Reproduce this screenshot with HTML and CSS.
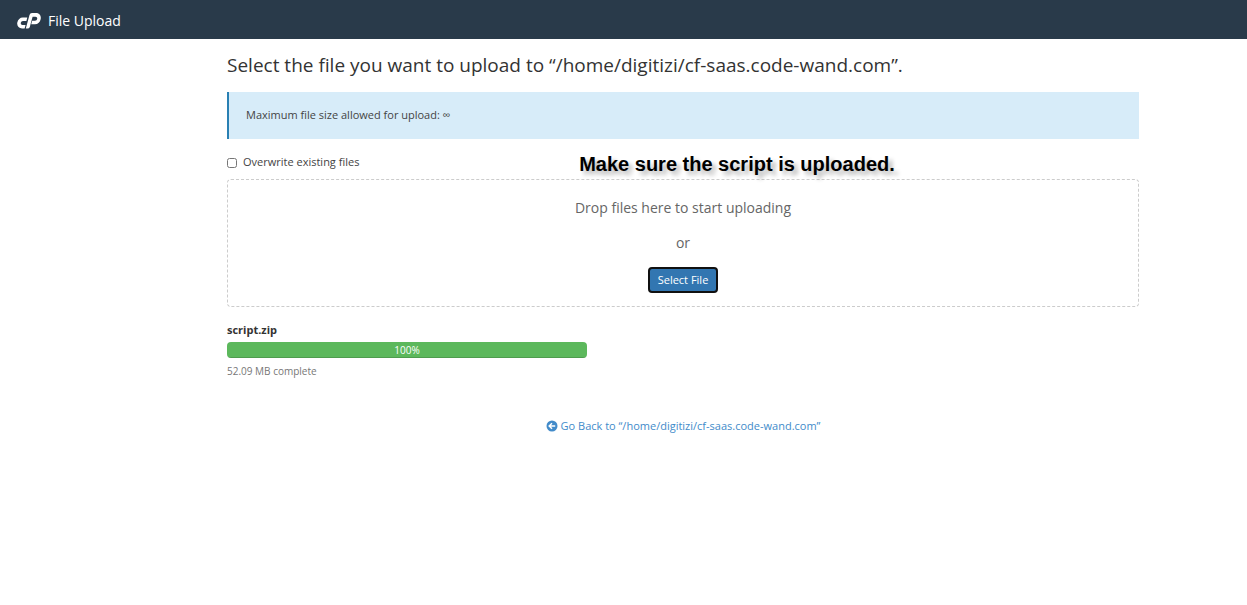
FILE: index.html
```html
<!DOCTYPE html>
<html lang="en">
<head>
<meta charset="utf-8">
<meta name="viewport" content="width=device-width, initial-scale=1">
<title>File Upload</title>
<link rel="stylesheet" href="styles.css">
</head>
<body>
<header class="navbar">
  <svg class="logo" viewBox="0 0 24 16" aria-hidden="true">
    <path fill="#fff" d="M5.700 4.500H10.300L9.400 7.900H6C4.800 7.900 4 8.700 3.800 9.800 3.600 11 4.300 11.900 5.500 11.900H8.600L7.600 15.400H5.100C1.700 15.400-.3 12.800.3 9.600.9 6.600 3 4.500 5.700 4.500Z"/>
    <path fill="#fff" fill-rule="evenodd" d="M8.800 15.600 12.500 2Q13 .1 15 .1H18.800C22.200.1 24.300 2.700 23.700 5.900 23.100 9 21 11.200 17.900 11.200H14.200L15.200 7.700H18C19.200 7.700 20 7 20.200 5.800 20.400 4.600 19.700 3.700 18.500 3.700H15.600L12.800 14Q12.300 15.600 10.600 15.600Z"/>
  </svg>
  <span class="brand">File Upload</span>
</header>
<main class="content">
  <h1 class="title">Select the file you want to upload to “/home/digitizi/cf-saas.code-wand.com”.</h1>
  <div class="callout">Maximum file size allowed for upload: ∞</div>
  <div class="options">
    <label class="overwrite"><input type="checkbox" class="check">Overwrite existing files</label>
    <strong class="annotation">Make sure the script is uploaded.</strong>
  </div>
  <section class="dropzone">
    <p class="drop-text">Drop files here to start uploading</p>
    <p class="drop-text">or</p>
    <button type="button" class="select-button">Select File</button>
  </section>
  <section class="upload">
    <div class="file-name">script.zip</div>
    <div class="progress" role="progressbar" aria-label="script.zip" aria-valuenow="100" aria-valuemin="0" aria-valuemax="100">
      <div class="progress-bar" style="width: 100%">100%</div>
    </div>
    <div class="status">52.09 MB complete</div>
  </section>
  <nav class="back">
    <a href="#" class="back-link">
      <svg class="back-icon" viewBox="0 0 12 12" aria-hidden="true">
        <circle cx="6" cy="6" r="5.500" fill="#428bca"/>
        <path d="M9.200 6H3.500M6 3.200 3.200 6 6 8.800" fill="none" stroke="#fff" stroke-width="1.500"/>
      </svg>
      <span>Go Back to “/home/digitizi/cf-saas.code-wand.com”</span>
    </a>
  </nav>
</main>
</body>
</html>
```
FILE: styles.css
```css
* {
  box-sizing: border-box;
}

body {
  margin: 0;
  background: #fff;
  color: #333;
  font-family: "Open Sans", "Noto Sans", sans-serif;
  font-size: 11px;
  line-height: 16px;
}

.navbar {
  display: flex;
  align-items: center;
  gap: 7px;
  padding: 11px 17px 8px;
  background: #293a4a;
  color: #fff;
}

.logo {
  width: 24px;
  height: 16px;
}

.brand {
  font-size: 14px;
  line-height: 20px;
}

.content {
  padding: 14px 108px 0 227px;
}

.title {
  margin: 0;
  font-size: 19px;
  font-weight: 400;
  line-height: 24px;
}

.callout {
  margin-top: 15px;
  padding: 15px 17px 16px;
  border-left: 2px solid #2980b3;
  background: #d7ecf9;
  color: #444;
}

.options {
  display: grid;
  grid-template-columns: 1fr auto 1fr;
  align-items: start;
  margin-top: 13px;
  padding-bottom: 3px;
}

.overwrite {
  display: flex;
  align-items: center;
  gap: 6px;
  padding-top: 2px;
  color: #444;
}

.check {
  width: 10px;
  height: 10px;
  margin: 1px 0 0;
}

.annotation {
  padding-left: 108px;
  color: #000;
  font-family: "Liberation Sans", Arial, sans-serif;
  font-size: 20px;
  line-height: 24px;
  text-shadow: 4px 4px 4px rgba(0, 0, 0, 0.3);
}

.dropzone {
  display: flex;
  flex-direction: column;
  align-items: center;
  gap: 15px;
  padding: 18px 15px 13px;
  border: 1px dashed #ccc;
  border-radius: 4px;
}

.drop-text {
  margin: 0;
  color: #666;
  font-size: 14px;
  line-height: 20px;
}

.select-button {
  margin-top: -1px;
  padding: 3px 8px;
  border: 2px solid #101010;
  border-radius: 4px;
  background: #3276b1;
  color: #fff;
  font: inherit;
  line-height: 16px;
}

.upload {
  margin-top: 15px;
}

.file-name {
  font-weight: 700;
}

.progress {
  width: 360px;
  max-width: 100%;
  margin-top: 4px;
  overflow: hidden;
  border-radius: 4px;
}

.progress-bar {
  background: #5cb85c;
  box-shadow: inset 0 -1px 0 rgba(0, 0, 0, 0.15);
  color: #fff;
  font-size: 10px;
  line-height: 16px;
  text-align: center;
}

.status {
  margin-top: 5px;
  color: #777;
  font-size: 10px;
}

.back {
  display: flex;
  justify-content: center;
  margin-top: 39px;
}

.back-link {
  display: flex;
  align-items: center;
  gap: 3px;
  color: #428bca;
  text-decoration: none;
}

.back-icon {
  width: 12px;
  height: 12px;
}
```
